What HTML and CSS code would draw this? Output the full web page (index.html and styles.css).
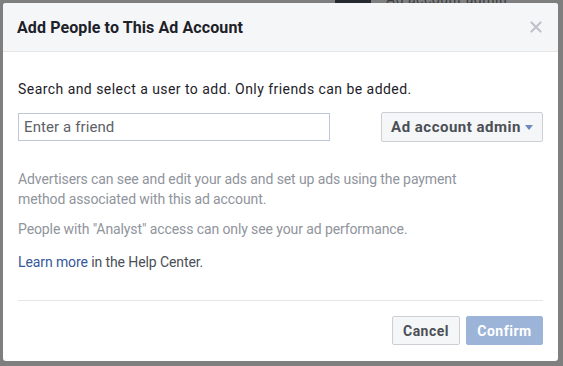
FILE: index.html
```html
<!DOCTYPE html>
<html lang="en">

<head>
    <meta charset="UTF-8">
    <meta name="viewport" content="width=device-width, initial-scale=1.0">
    <title>Add People to This Ad Account</title>
    <link rel="stylesheet" href="styles.css">
</head>

<body>
    <div class="page-behind">
        <div class="behind-thumb"></div>
        <div class="behind-text">Ad account admin</div>
    </div>
    <div class="dialog">
        <div class="dialog-header">
            <div class="dialog-title">Add People to This Ad Account</div>
            <button class="close" aria-label="Close">
                <svg width="12" height="12" viewBox="0 0 12 12">
                    <path d="M1.5 1.5 L10.5 10.5 M10.5 1.5 L1.5 10.5" stroke="#bec3c9" stroke-width="2.2" stroke-linecap="round" />
                </svg>
            </button>
        </div>
        <div class="dialog-body">
            <p class="intro">Search and select a user to add. Only friends can be added.</p>
            <div class="pick-row">
                <input type="text" class="friend-input" placeholder="Enter a friend">
                <button class="role-select">
                    Ad account admin
                    <svg width="8" height="5" viewBox="0 0 8 5">
                        <path d="M0 0 L8 0 L4 5 Z" fill="#6d88c2" />
                    </svg>
                </button>
            </div>
            <p class="note">Advertisers can see and edit your ads and set up ads using the payment method associated with this ad account.</p>
            <p class="note">People with "Analyst" access can only see your ad performance.</p>
            <p class="help"><a href="#">Learn more</a> in the Help Center.</p>
        </div>
        <div class="dialog-footer">
            <button class="btn cancel">Cancel</button>
            <button class="btn confirm">Confirm</button>
        </div>
    </div>
</body>

</html>
```

FILE: styles.css
```css
body {
    margin: 0;
    background-color: #7f7f7f;
    font-family: Roboto, "Liberation Sans", sans-serif;
    font-size: 14px;
    color: #1d2129;
    height: 100vh;
    overflow: hidden;
    position: relative;
}

.page-behind {
    position: absolute;
    top: 0;
    left: 0;
    width: 100%;
    height: 3px;
    overflow: hidden;
}

.behind-thumb {
    position: absolute;
    left: 335px;
    top: 0;
    width: 36px;
    height: 10px;
    background-color: #262a30;
}

.behind-text {
    position: absolute;
    left: 386px;
    top: -9px;
    font-size: 14px;
    letter-spacing: 0.5px;
    color: #3a3d42;
}

.dialog {
    position: relative;
    margin: 3px 0 0 3px;
    width: 555px;
    height: 358px;
    background-color: white;
    border-radius: 3px;
    overflow: hidden;
    display: flex;
    flex-direction: column;
}

.dialog-header {
    height: 48px;
    background-color: #f5f6f7;
    border-bottom: 1px solid #e5e5e5;
    display: flex;
    align-items: center;
    justify-content: space-between;
    padding: 0 15px 0 14px;
}

.dialog-title {
    font-size: 16px;
    font-weight: bold;
    letter-spacing: 0.1px;
    color: #1d2129;
}

.close {
    border: none;
    background: none;
    padding: 0;
    width: 14px;
    height: 14px;
    display: flex;
    align-items: center;
    justify-content: center;
}

.dialog-body {
    padding: 27px 15px 0 15px;
    line-height: 20px;
}

.dialog-body p {
    margin: 0;
}

.intro {
    color: #1d2129;
    letter-spacing: 0.45px;
}

.pick-row {
    display: flex;
    justify-content: space-between;
    align-items: center;
    margin: 13px 0 27px;
}

.friend-input {
    box-sizing: border-box;
    width: 312px;
    height: 28px;
    border: 1px solid #bdc7d8;
    padding: 0 5px;
    font-family: Roboto, "Liberation Sans", sans-serif;
    font-size: 15px;
    letter-spacing: 0.1px;
    color: #1d2129;
    outline: none;
}

.friend-input::placeholder {
    color: #5d6168;
}

.role-select {
    box-sizing: border-box;
    width: 162px;
    height: 30px;
    background-color: #f5f6f7;
    border: 1px solid #ccd0d5;
    border-radius: 2px;
    font-family: Roboto, "Liberation Sans", sans-serif;
    font-size: 15px;
    font-weight: bold;
    letter-spacing: 0.5px;
    color: #4b4f56;
    display: flex;
    align-items: center;
    justify-content: center;
    gap: 4px;
    padding: 0 6px;
}

.note {
    max-width: 470px;
    color: #90949c;
    letter-spacing: -0.1px;
    margin-bottom: 10px !important;
}

.help {
    margin-top: 13px !important;
    color: #4b4f56;
    letter-spacing: -0.1px;
}

.help a {
    color: #365899;
    text-decoration: none;
}

.dialog-footer {
    margin: auto 15px 0;
    border-top: 1px solid #e5e5e5;
    padding: 15px 0 16px;
    display: flex;
    justify-content: flex-end;
    gap: 6px;
}

.btn {
    box-sizing: border-box;
    height: 29px;
    border-radius: 2px;
    font-family: Roboto, "Liberation Sans", sans-serif;
    font-size: 14px;
    font-weight: bold;
    letter-spacing: 0.5px;
    padding: 0;
}

.cancel {
    width: 68px;
    background-color: #f5f6f7;
    border: 1px solid #ccd0d5;
    color: #4b4f56;
}

.confirm {
    width: 77px;
    background-color: #9cb4d8;
    border: 1px solid #9cb4d8;
    color: white;
}
```
